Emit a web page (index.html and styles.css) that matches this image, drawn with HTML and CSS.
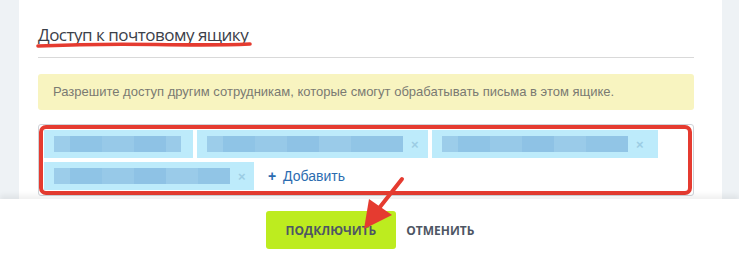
FILE: index.html
```html
<!DOCTYPE html>
<html lang="ru">
<head>
    <meta charset="UTF-8">
    <meta name="viewport" content="width=device-width, initial-scale=1.0">
    <title>Доступ к почтовому ящику</title>
    <link rel="stylesheet" href="styles.css">
</head>
<body>
    <div class="panel">
        <div class="title-wrap">
            <h2 class="title">Доступ к почтовому ящику</h2>
            <svg class="title-mark" width="220" height="9" viewBox="0 0 220 9">
                <path d="M2 6 Q 60 3.5 120 4.5 T 214 4" fill="none" stroke="#e53b30" stroke-width="3.6" stroke-linecap="round"/>
            </svg>
        </div>

        <div class="notice">Разрешите доступ другим сотрудникам, которые смогут обрабатывать письма в этом ящике.</div>

        <div class="tags">
            <div class="tag" style="width: 149px;"><span class="blur" style="width: 127px;"></span></div>
            <div class="tag" style="width: 231px;"><span class="blur" style="width: 196px;"></span><span class="remove">×</span></div>
            <div class="tag" style="width: 226px;"><span class="blur" style="width: 186px;"></span><span class="remove">×</span></div>
            <div class="tag" style="width: 210px;"><span class="blur" style="width: 176px;"></span><span class="remove">×</span></div>
            <a class="add" href="#"><b>+</b> Добавить</a>
            <div class="mark"></div>
        </div>
    </div>

    <div class="footer">
        <button class="btn primary">Подключить</button>
        <button class="btn link">Отменить</button>
    </div>

    <svg class="arrow" width="50" height="60" viewBox="0 0 50 60">
        <line x1="44" y1="5" x2="22" y2="33" stroke="#e53b30" stroke-width="4" stroke-linecap="round"/>
        <polygon points="6,55 11,25 34,41" fill="#e53b30"/>
    </svg>
</body>
</html>
```

FILE: styles.css
```css
* {
    margin: 0;
    padding: 0;
    box-sizing: border-box;
}

body {
    background: #eef2f5;
    font-family: "Liberation Sans", Arial, sans-serif;
    position: relative;
    min-height: 265px;
}

.panel {
    background: white;
    margin: 0 17px 0 19px;
    padding: 23px 28px 3px 19px;
    position: relative;
    z-index: 1;
}

.title-wrap {
    position: relative;
    border-bottom: 1px solid #d9d9d9;
    padding-bottom: 10px;
}

.title {
    font-family: "Open Sans", sans-serif;
    font-size: 17px;
    letter-spacing: -0.5px;
    font-weight: normal;
    line-height: 24px;
    color: #3b4049;
}

.title-mark {
    position: absolute;
    left: -2px;
    top: 17px;
}

.notice {
    margin-top: 16px;
    background: #f8f4c0;
    border-radius: 3px;
    padding: 10px 15px;
    font-size: 13px;
    line-height: 16px;
    color: #7a7a72;
}

.tags {
    position: relative;
    margin-top: 14px;
    border: 1px solid #cfd3d8;
    border-radius: 3px;
    padding: 5px;
    display: flex;
    flex-wrap: wrap;
    gap: 4px;
    align-items: center;
}

.tag {
    height: 28px;
    background: #bdebfb;
    display: flex;
    align-items: center;
    padding-left: 10px;
}

.blur {
    display: block;
    height: 16px;
    background: linear-gradient(90deg, #9ccdea 0 16px, #8fc4e6 16px 48px, #97c9e8 48px 80px, #8ec2e5 80px 112px, #9acbe9 112px 144px, #91c5e6 144px);
}

.remove {
    margin-left: 8px;
    font-size: 13px;
    font-weight: bold;
    color: #9ccde4;
}

.add {
    margin-left: 10px;
    font-size: 14px;
    color: #2b6cb0;
    text-decoration: none;
}

.add b {
    margin-right: 3px;
}

.mark {
    position: absolute;
    top: 0;
    left: 0;
    right: 1px;
    bottom: 0;
    border: 4px solid #e53b30;
    border-radius: 7px;
}

.footer {
    background: white;
    box-shadow: 0 -4px 5px rgba(0, 0, 0, 0.06);
    min-height: 70px;
    padding: 12px 0 12px 11px;
    display: flex;
    justify-content: center;
    align-items: flex-start;
    position: relative;
    z-index: 2;
}

.btn {
    height: 38px;
    border: none;
    border-radius: 3px;
    font-family: "Open Sans", sans-serif;
    font-size: 12px;
    font-weight: bold;
    text-transform: uppercase;
    color: #4e5664;
    background: none;
    cursor: pointer;
}

.btn.primary {
    background: #bdec1f;
    padding: 0 20px;
}

.btn.link {
    padding: 0 10px;
}

.arrow {
    position: absolute;
    left: 358px;
    top: 174px;
    z-index: 3;
}
```
